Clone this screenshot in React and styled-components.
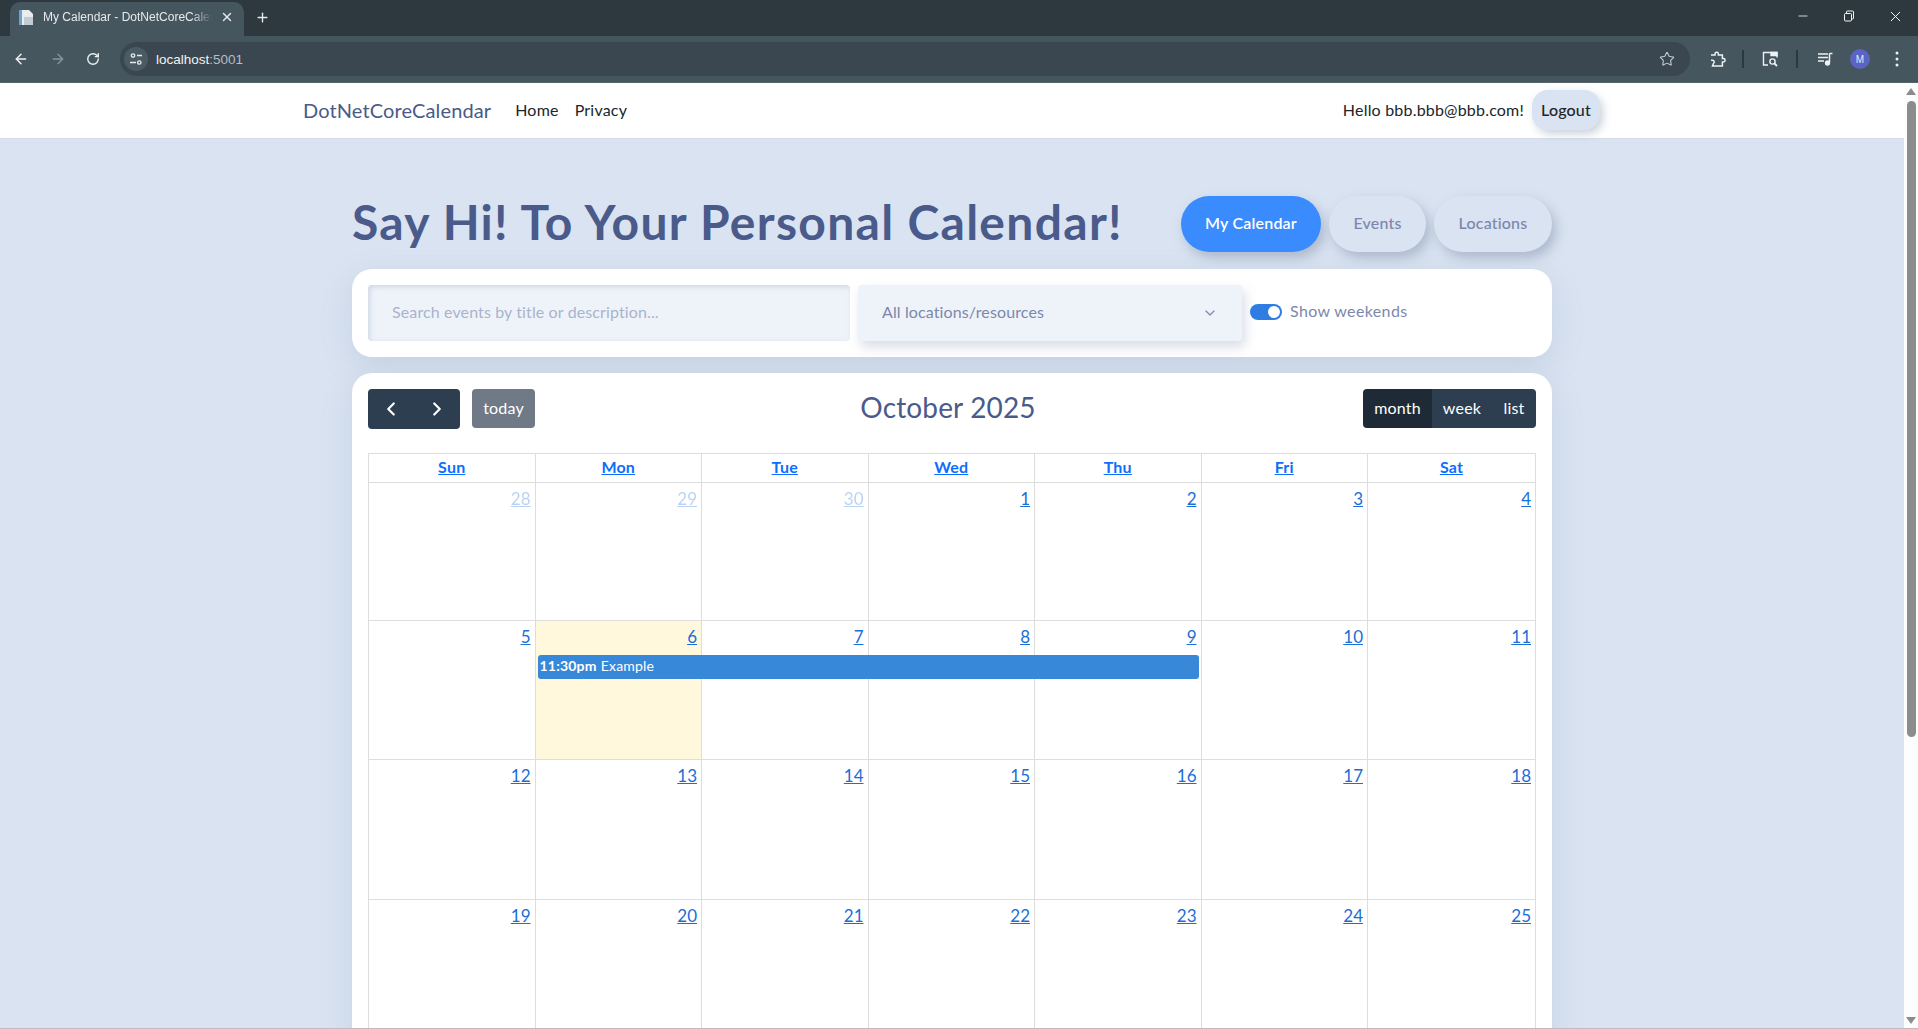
import React from "react";
import styled, { createGlobalStyle } from "styled-components";
import { ArrowLeft, ArrowRight, RotateCw, Star, Plus, X, Minus, ChevronLeft, ChevronRight, ChevronDown } from "lucide-react";

const FONT = `Lato, "Noto Sans", "Liberation Sans", sans-serif`;

const weeks = [
  [28, 29, 30, 1, 2, 3, 4],
  [5, 6, 7, 8, 9, 10, 11],
  [12, 13, 14, 15, 16, 17, 18],
  [19, 20, 21, 22, 23, 24, 25],
];
const dayNames = ["Sun", "Mon", "Tue", "Wed", "Thu", "Fri", "Sat"];

function BrowserChrome() {
  return (
    <Chrome>
      <TabStrip>
        <Tab>
          <svg width="17" height="17" viewBox="0 0 17 17">
            <path d="M1 1h10l4 4v11H1z" fill="#e8edf0" />
            <path d="M1 1h3v15H1z" fill="#6ea3d0" />
            <path d="M6 8h9v8H6z" fill="#c3ccd2" />
          </svg>
          <TabTitle>My Calendar - DotNetCoreCalendar</TabTitle>
          <X size={14} strokeWidth={2.4} color="#e6eaec" />
        </Tab>
        <NewTab>
          <Plus size={15} strokeWidth={2.2} />
        </NewTab>
        <WindowControls>
          <Minus size={14} strokeWidth={1.4} />
          <svg width="12" height="12" viewBox="0 0 12 12" fill="none" stroke="#f4f6f7">
            <rect x="1.500" y="3.500" width="7" height="7.500" rx="1" />
            <path d="M3.500 3.500V2a1 1 0 0 1 1-1h5a1 1 0 0 1 1 1v6a1 1 0 0 1-1 1H8.500" />
          </svg>
          <X size={17} strokeWidth={1.4} />
        </WindowControls>
      </TabStrip>
      <Toolbar>
        <NavIcons>
          <ArrowLeft size={16} strokeWidth={2.2} color="#eef1f3" />
          <ArrowRight size={16} strokeWidth={2} color="#8a979e" />
          <RotateCw size={14} strokeWidth={2.4} color="#eef1f3" />
        </NavIcons>
        <AddressBar>
          <SiteBadge>
            <svg width="14" height="14" viewBox="0 0 14 14" fill="none" stroke="#e6eaec" strokeWidth="1.3">
              <circle cx="4" cy="3.500" r="1.700" />
              <path d="M8 3.500h5M1 10.500h6" />
              <circle cx="10.300" cy="10.500" r="1.700" />
            </svg>
          </SiteBadge>
          <Url>
            localhost<UrlPort>:5001</UrlPort>
          </Url>
          <Star size={16} strokeWidth={1.6} color="#c5ccd0" />
        </AddressBar>
        <ToolIcons>
          <svg width="17" height="17" viewBox="0 0 17 17" fill="none" stroke="#eef1f3" strokeWidth="1.5">
            <path d="M2 4h4V3a1.700 1.700 0 0 1 3.400 0v1h4v3.500h1a1.700 1.700 0 0 1 0 3.400h-1V15H3.500l1-2.500a1.800 1.800 0 0 0-1-3.200H2" />
          </svg>
          <ToolDivider />
          <svg width="18" height="18" viewBox="0 0 18 18" fill="none" stroke="#eef1f3" strokeWidth="1.4">
            <path d="M7 15H2.500V2.500H16v5" />
            <path d="M10 2.500h6v3h-6z" fill="#eef1f3" />
            <circle cx="11.500" cy="11.500" r="2.600" />
            <path d="M13.500 13.500l2.500 2.500" strokeWidth="1.800" />
          </svg>
          <ToolDivider />
          <svg width="17" height="17" viewBox="0 0 17 17" fill="none" stroke="#eef1f3" strokeWidth="1.5">
            <path d="M1 3h10M1 6.500h10M1 10h6" />
            <path d="M12.500 2.500v9" />
            <path d="M12.500 2.500h3" />
            <circle cx="10.500" cy="12" r="1.900" fill="#eef1f3" />
          </svg>
          <Avatar>M</Avatar>
          <svg width="4" height="16" viewBox="0 0 4 16" fill="#eef1f3">
            <circle cx="2" cy="2" r="1.500" />
            <circle cx="2" cy="8" r="1.500" />
            <circle cx="2" cy="14" r="1.500" />
          </svg>
        </ToolIcons>
      </Toolbar>
    </Chrome>
  );
}

function Week({ days, index }) {
  return (
    <WeekRow $height={[138, 139, 140, 140][index]}>
      {days.map((d, i) => (
        <DayCell key={d} $col={i + 1} $today={index === 1 && i === 1}>
          <DayNumber href="#" $muted={index === 0 && i < 3}>
            {d}
          </DayNumber>
        </DayCell>
      ))}
      {index === 1 && (
        <EventBar>
          <b>11:30pm</b>
          <span>Example</span>
        </EventBar>
      )}
    </WeekRow>
  );
}

export default function App() {
  return (
    <>
      <GlobalStyle />
      <Screen>
        <BrowserChrome />
        <Viewport>
          <Page>
            <NavBar>
              <NavInner>
                <Brand>DotNetCoreCalendar</Brand>
                <NavLink>Home</NavLink>
                <NavLink>Privacy</NavLink>
                <NavRight>
                  <span>Hello bbb.bbb@bbb.com!</span>
                  <LogoutButton>Logout</LogoutButton>
                </NavRight>
              </NavInner>
            </NavBar>
            <Main>
              <HeaderRow>
                <Title>Say Hi! To Your Personal Calendar!</Title>
                <Pills>
                  <Pill $active $width={140}>My Calendar</Pill>
                  <Pill $width={97}>Events</Pill>
                  <Pill $width={118}>Locations</Pill>
                </Pills>
              </HeaderRow>
              <FilterCard>
                <SearchBox>Search events by title or description...</SearchBox>
                <SelectBox>
                  <span>All locations/resources</span>
                  <ChevronDown size={16} strokeWidth={1.8} />
                </SelectBox>
                <Toggle />
                <ToggleLabel>Show weekends</ToggleLabel>
              </FilterCard>
              <CalendarCard>
                <CalToolbar>
                  <ToolGroup>
                    <ArrowGroup>
                      <ArrowButton>
                        <ChevronLeft size={22} strokeWidth={2.4} />
                      </ArrowButton>
                      <ArrowButton>
                        <ChevronRight size={22} strokeWidth={2.4} />
                      </ArrowButton>
                    </ArrowGroup>
                    <TodayButton>today</TodayButton>
                  </ToolGroup>
                  <MonthTitle>October 2025</MonthTitle>
                  <ViewGroup>
                    <ViewButton $active $width={69}>month</ViewButton>
                    <ViewButton $width={60}>week</ViewButton>
                    <ViewButton $width={44}>list</ViewButton>
                  </ViewGroup>
                </CalToolbar>
                <Grid>
                  <HeadRow>
                    {dayNames.map((n) => (
                      <HeadCell key={n}>
                        <a href="#">{n}</a>
                      </HeadCell>
                    ))}
                  </HeadRow>
                  {weeks.map((w, i) => (
                    <Week key={i} days={w} index={i} />
                  ))}
                </Grid>
              </CalendarCard>
            </Main>
          </Page>
          <ScrollBar>
            <ScrollArrow />
            <ScrollThumb />
            <ScrollArrow $down />
          </ScrollBar>
        </Viewport>
        <BottomLine />
      </Screen>
    </>
  );
}

const GlobalStyle = createGlobalStyle`
  * { box-sizing: border-box; }
  html, body { margin: 0; height: 100%; overflow: hidden; }
  body { font-family: ${FONT}; font-size: 16px; letter-spacing: 0.2px; background: #d9e3f1; }
`;

const Screen = styled.div`
  width: 1918px;
  height: 1029px;
  display: flex;
  flex-direction: column;
  overflow: hidden;
`;

const Chrome = styled.div`
  flex: none;
  height: 83px;
  font-family: "Liberation Sans", sans-serif;
  letter-spacing: 0;
  color: #e6eaec;
`;

const TabStrip = styled.div`
  height: 36px;
  background: #2d383f;
  display: flex;
  align-items: flex-end;
  padding-left: 10px;
`;

const Tab = styled.div`
  width: 234px;
  height: 34px;
  background: #45565f;
  border-radius: 10px 10px 0 0;
  display: flex;
  align-items: center;
  gap: 8px;
  padding: 0 10px 4px 8px;
`;

const TabTitle = styled.span`
  flex: 1;
  font-size: 12px;
  white-space: nowrap;
  overflow: hidden;
  mask-image: linear-gradient(90deg, #000 88%, transparent);
`;

const NewTab = styled.div`
  width: 36px;
  height: 34px;
  padding-bottom: 4px;
  display: flex;
  align-items: center;
  justify-content: center;
`;

const WindowControls = styled.div`
  margin-left: auto;
  height: 36px;
  width: 138px;
  display: flex;
  align-items: center;
  justify-content: space-between;
  padding: 0 14px 4px 16px;
  color: #f4f6f7;
`;

const Toolbar = styled.div`
  height: 47px;
  background: #45565f;
  display: flex;
  align-items: center;
  border-bottom: 1px solid #55656e;
`;

const NavIcons = styled.div`
  width: 120px;
  padding: 0 20px 0 13px;
  display: flex;
  align-items: center;
  justify-content: space-between;
`;

const AddressBar = styled.div`
  width: 1570px;
  height: 34px;
  border-radius: 17px;
  background: #3a4750;
  display: flex;
  align-items: center;
  padding: 0 15px 0 4px;
`;

const SiteBadge = styled.div`
  width: 24px;
  height: 24px;
  border-radius: 50%;
  background: #4b5b64;
  display: flex;
  align-items: center;
  justify-content: center;
`;

const Url = styled.span`
  flex: 1;
  margin-left: 8px;
  font-size: 13.500px;
  color: #f1f3f4;
`;

const UrlPort = styled.span`
  color: #b4bec4;
`;

const ToolIcons = styled.div`
  flex: none;
  margin-left: 14px;
  display: grid;
  grid-template-columns: 26px 26.500px 27px 27px 30.500px 38px 36px;
  align-items: center;
  justify-items: center;
`;

const ToolDivider = styled.div`
  width: 2px;
  height: 18px;
  background: #2d383f;
`;

const Avatar = styled.div`
  width: 20px;
  height: 20px;
  border-radius: 50%;
  background: #5b63c4;
  color: #e8eaf6;
  font-size: 10px;
  display: flex;
  align-items: center;
  justify-content: center;
`;

const Viewport = styled.div`
  flex: 1;
  min-height: 0;
  display: flex;
`;

const Page = styled.div`
  flex: 1;
  min-width: 0;
  overflow: hidden;
  background: #d9e3f1;
`;

const NavBar = styled.nav`
  height: 56px;
  background: #fff;
  border-bottom: 1px solid #d5dde9;
`;

const NavInner = styled.div`
  width: 1320px;
  height: 100%;
  margin: 0 auto;
  padding: 0 12px 2px 11px;
  display: flex;
  align-items: center;
  color: #212529;
`;

const Brand = styled.span`
  font-size: 20px;
  letter-spacing: 0.12px;
  color: #4a5a8a;
  margin-right: 24px;
`;

const NavLink = styled.span`
  margin-right: 16px;
`;

const NavRight = styled.div`
  margin-left: auto;
  display: flex;
  align-items: center;
  gap: 8px;
`;

const LogoutButton = styled.button`
  height: 40px;
  width: 68px;
  border: 0;
  padding: 0 0 2px;
  margin-top: 1px;
  border-radius: 16px;
  background: #d9e3f1;
  font: inherit;
  font-weight: 500;
  letter-spacing: 0.2px;
  color: #212529;
  box-shadow: 3px 4px 8px rgba(140, 155, 180, 0.45);
`;

const Main = styled.main`
  width: 1200px;
  margin: 0 auto;
  padding-top: 57px;
`;

const HeaderRow = styled.div`
  height: 56px;
  display: flex;
  align-items: center;
  justify-content: space-between;
  margin-bottom: 17px;
`;

const Title = styled.h1`
  margin: 0 0 6px;
  font-size: 48px;
  font-weight: 700;
  letter-spacing: 1.3px;
  color: #4a5a8a;
  white-space: nowrap;
`;

const Pills = styled.div`
  display: flex;
  gap: 8px;
`;

const Pill = styled.button`
  height: 56px;
  width: ${(p) => p.$width}px;
  padding: 0 0 3px;
  border: 0;
  border-radius: 28px;
  font: inherit;
  letter-spacing: 0.2px;
  font-weight: ${(p) => (p.$active ? 600 : 500)};
  color: ${(p) => (p.$active ? "#fff" : "#7c87ad")};
  background: ${(p) => (p.$active ? "#3a8cfe" : "#d9e3f1")};
  box-shadow: 4px 6px 12px rgba(130, 145, 170, 0.5);
`;

const FilterCard = styled.section`
  height: 88px;
  background: #fff;
  border-radius: 20px;
  padding: 16px;
  display: flex;
  align-items: center;
  margin-bottom: 16px;
  box-shadow: 0 10px 30px rgba(130, 150, 180, 0.22);
`;

const SearchBox = styled.div`
  width: 482px;
  height: 56px;
  margin-right: 8px;
  padding: 0 24px 3px;
  display: flex;
  align-items: center;
  border-radius: 4px;
  background: #eef3f9;
  color: #a9b3cd;
  letter-spacing: 0.12px;
  box-shadow: inset 2px 2px 5px rgba(160, 175, 200, 0.4);
`;

const SelectBox = styled.div`
  width: 384px;
  height: 56px;
  margin-right: 8px;
  padding: 0 24px 3px;
  display: flex;
  align-items: center;
  justify-content: space-between;
  border-radius: 4px;
  background: #eef3f9;
  color: #7c87ad;
  letter-spacing: 0.12px;
  box-shadow: 3px 6px 12px rgba(140, 155, 185, 0.35);
  & svg { margin-top: 3px; }
`;

const Toggle = styled.div`
  width: 32px;
  height: 16px;
  margin-right: 8px;
  margin-top: -2px;
  border-radius: 8px;
  background: #2f7de1;
  position: relative;
  &::after {
    content: "";
    position: absolute;
    right: 2px;
    top: 2px;
    width: 12px;
    height: 12px;
    border-radius: 50%;
    background: #fff;
  }
`;

const ToggleLabel = styled.span`
  color: #7c87ad;
  letter-spacing: 0.37px;
  margin-top: -5px;
`;

const CalendarCard = styled.section`
  background: #fff;
  border-radius: 20px 20px 0 0;
  padding: 16px;
  box-shadow: 0 10px 30px rgba(130, 150, 180, 0.22);
`;

const CalToolbar = styled.div`
  height: 40px;
  display: flex;
  align-items: center;
  justify-content: space-between;
  margin-bottom: 24px;
`;

const ToolGroup = styled.div`
  width: 296px;
  display: flex;
  gap: 12px;
`;

const ArrowGroup = styled.div`
  display: flex;
`;

const ArrowButton = styled.button`
  width: 46px;
  height: 40px;
  border: 0;
  padding: 0;
  display: flex;
  align-items: center;
  justify-content: center;
  background: #2c3e50;
  color: #fff;
  &:first-child { border-radius: 4px 0 0 4px; }
  &:last-child { border-radius: 0 4px 4px 0; }
`;

const TodayButton = styled.button`
  width: 63px;
  height: 39px;
  border: 0;
  padding: 0 0 2px;
  border-radius: 4px;
  background: #6f7a86;
  color: #fff;
  font: inherit;
  letter-spacing: 0.2px;
`;

const MonthTitle = styled.h2`
  margin: 0 0 4px;
  font-size: 28px;
  font-weight: 400;
  letter-spacing: 0.15px;
  color: #4a5a8a;
`;

const ViewGroup = styled.div`
  width: 304px;
  margin-top: -1px;
  display: flex;
  justify-content: flex-end;
  & > :first-child { border-radius: 4px 0 0 4px; }
  & > :last-child { border-radius: 0 4px 4px 0; }
`;

const ViewButton = styled.button`
  height: 39px;
  width: ${(p) => p.$width}px;
  border: 0;
  padding: 0 0 3px;
  background: ${(p) => (p.$active ? "#1e2b37" : "#2c3e50")};
  color: #fff;
  font: inherit;
  letter-spacing: 0.2px;
`;

const Grid = styled.div`
  border-top: 1px solid #ddd;
  border-left: 1px solid #ddd;
`;

const HeadRow = styled.div`
  display: grid;
  grid-template-columns: repeat(6, 166.500px) 1fr;
  height: 29px;
`;

const HeadCell = styled.div`
  border-right: 1px solid #ddd;
  border-bottom: 1px solid #ddd;
  display: flex;
  align-items: center;
  justify-content: center;
  padding-bottom: 3px;
  & a {
    color: #0d6efd;
    font-weight: 700;
  }
`;

const WeekRow = styled.div`
  display: grid;
  grid-template-columns: repeat(6, 166.500px) 1fr;
  height: ${(p) => p.$height}px;
`;

const DayCell = styled.div`
  grid-row: 1;
  grid-column: ${(p) => p.$col};
  border-right: 1px solid #ddd;
  border-bottom: 1px solid #ddd;
  background: ${(p) => (p.$today ? "#fff8dc" : "transparent")};
  text-align: right;
  padding: 5px 4px 0;
  font-size: 17px;
  letter-spacing: 0;
`;

const DayNumber = styled.a`
  color: #1a6ed8;
  opacity: ${(p) => (p.$muted ? 0.3 : 1)};
`;

const EventBar = styled.div`
  grid-row: 1;
  grid-column: 2 / span 4;
  align-self: start;
  height: 24px;
  margin: 34px 3px 0 2px;
  padding: 0 2px 3px;
  border-radius: 3px;
  background: #3788d8;
  color: #fff;
  font-size: 14px;
  display: flex;
  align-items: center;
  gap: 4px;
  z-index: 1;
`;

const ScrollBar = styled.div`
  flex: none;
  width: 14px;
  background: #fdfdfd;
  display: flex;
  flex-direction: column;
  align-items: center;
  padding: 5px 0 4px;
`;

const ScrollArrow = styled.div`
  flex: none;
  width: 0;
  height: 0;
  border-left: 5px solid transparent;
  border-right: 5px solid transparent;
  ${(p) =>
    p.$down ? "border-top: 7px solid #8c8c8c; margin-top: auto;" : "border-bottom: 7px solid #8c8c8c;"}
`;

const ScrollThumb = styled.div`
  width: 9px;
  height: 636px;
  margin-top: 6px;
  border-radius: 5px;
  background: #8c8c8c;
`;

const BottomLine = styled.div`
  flex: none;
  height: 1px;
  background: #c9b9b9;
`;
